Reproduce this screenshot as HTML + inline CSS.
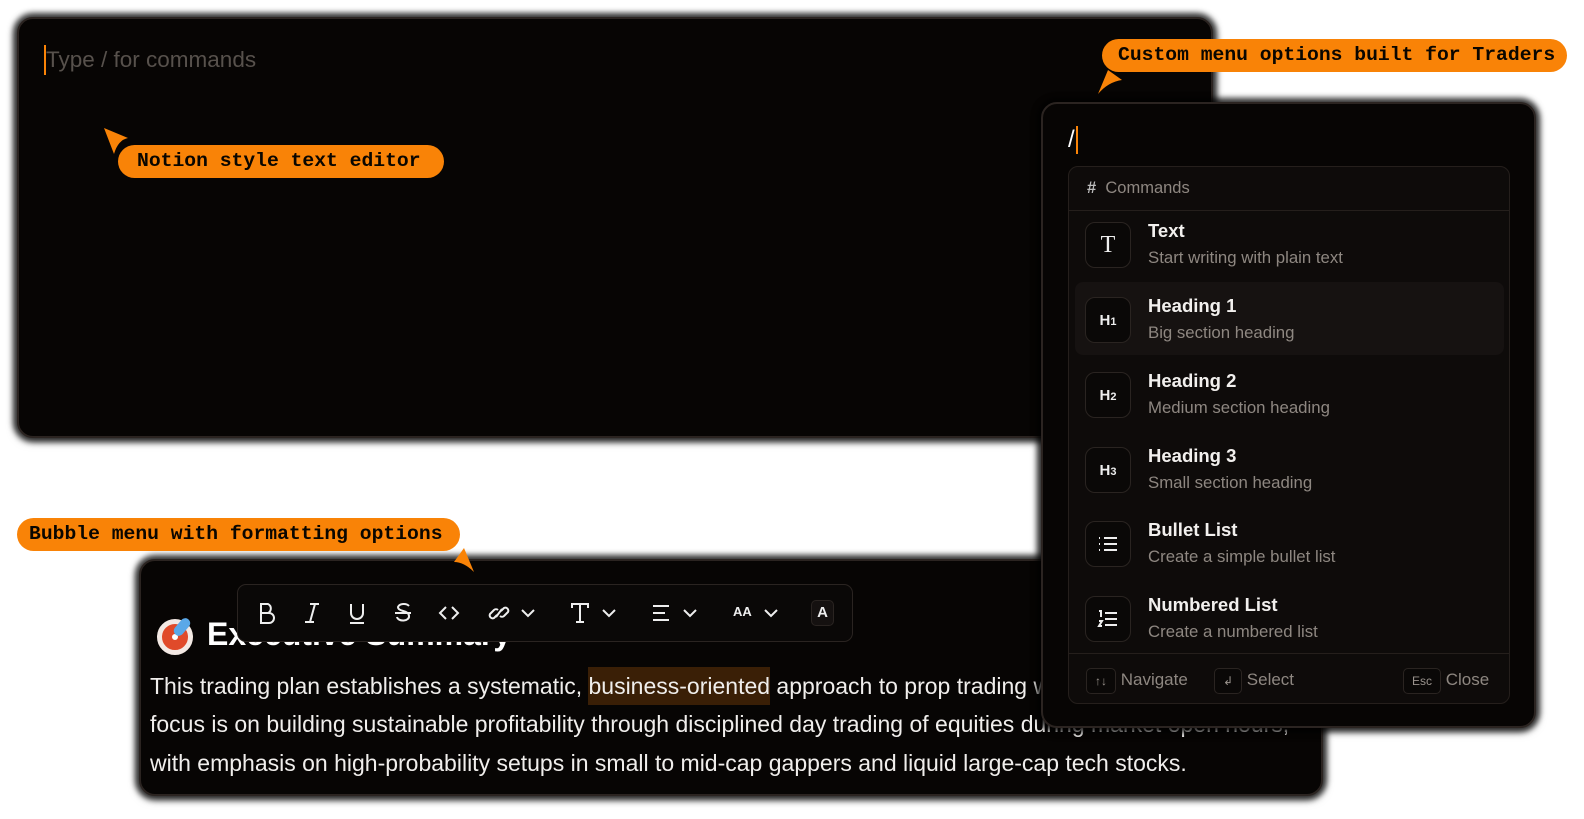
<!DOCTYPE html>
<html><head><meta charset="utf-8"><style>
*{margin:0;padding:0;box-sizing:border-box}
body{width:1584px;height:819px;background:#fff;position:relative;overflow:hidden;font-family:"Liberation Sans",sans-serif}
.panel{position:absolute;background:#070504;border:2px solid #2b2421;border-radius:16px;box-shadow:0 0 6px 4px rgba(0,0,0,.75),0 2px 10px rgba(0,0,0,.5)}
.pill{position:absolute;background:#f98307;color:#0a0600;border-radius:17px;font-family:"Liberation Mono",monospace;font-weight:bold;font-size:19.7px;height:33px;line-height:33px;padding-left:19px;white-space:nowrap}
.card{position:absolute;left:1068px;top:166px;width:442px;height:538px;background:#0e0b0a;border:1px solid #251f1c;border-radius:10px}
.item{position:absolute;left:0;width:440px;height:72px}
.ib{position:absolute;left:16px;top:4px;width:46px;height:46px;border:1px solid #2a2421;border-radius:10px;background:#0a0807;color:#eee;display:flex;align-items:center;justify-content:center;font-weight:bold;font-size:15px}
.t1{position:absolute;left:79px;top:2px;color:#f2f0ee;font-weight:bold;font-size:18.5px}
.t2{position:absolute;left:79px;top:30px;color:#8e8781;font-size:16.8px}
.kb{display:inline-block;border:1px solid #2a2421;border-radius:5px;background:#0a0807;color:#9a938d;font-size:12px;height:26px;line-height:24px;padding:0 8px;vertical-align:middle}
.ft{position:absolute;top:500px;color:#8e8781;font-size:17px;line-height:26px}
.tb svg{position:absolute;top:600px}
p.l{position:absolute;left:150px;color:#f0eeec;font-size:23px;white-space:nowrap}
.hl{background:#3a1f06;padding:6px 0}
</style></head><body>

<div class="panel" style="left:17px;top:17px;width:1196px;height:421px">
 <div style="position:absolute;left:25px;top:26px;width:2px;height:30px;background:#f98307"></div>
 <div style="position:absolute;left:27px;top:28px;color:#57514c;font-size:22.5px">Type / for commands</div>
</div>

<div class="pill" style="left:118px;top:145px;width:326px">Notion style text editor</div>
<svg style="position:absolute;left:102px;top:126px" width="30" height="30"><path d="M2 2 L26 12 Q16 14 12 28 Z" fill="#f98307"/></svg>

<div class="panel" style="left:139px;top:559px;width:1184px;height:237px">
 <div style="position:absolute;left:16px;top:58px;width:36px;height:36px;border-radius:50%;background:#e04a2a;border:5px solid #f3e9e4;box-shadow:inset 0 0 0 6px #e04a2a"></div>
 <div style="position:absolute;left:28px;top:70px;width:12px;height:12px;border-radius:50%;background:#fff;border:3px solid #e04a2a"></div>
 <div style="position:absolute;left:36px;top:56px;width:10px;height:20px;background:#5aa8e8;border-radius:5px;transform:rotate(40deg)"></div>
 <div style="position:absolute;left:66px;top:55px;color:#fff;font-weight:bold;font-size:32px">Executive Summary</div>
</div>
<p class="l" style="top:673px">This trading plan establishes a systematic, <span class="hl">business-oriented</span> approach to prop trading with a specific</p>
<p class="l" style="top:711px">focus is on building sustainable profitability through disciplined day trading of equities during market open hours,</p>
<p class="l" style="top:750px">with emphasis on high-probability setups in small to mid-cap gappers and liquid large-cap tech stocks.</p>

<div class="tb" style="position:absolute;left:0;top:0">
 <div style="position:absolute;left:237px;top:584px;width:616px;height:58px;background:#0a0807;border:1px solid #2a2421;border-radius:9px"></div>
 <svg style="left:256px" width="22" height="26" viewBox="0 0 22 26" fill="none" stroke="#eee" stroke-width="2"><path d="M5 4h7a5 5 0 010 9H5zM5 13h8a5 5 0 010 10H5z"/></svg>
 <svg style="left:301px" width="22" height="26" viewBox="0 0 22 26" fill="none" stroke="#eee" stroke-width="2"><path d="M9 4h9M4 22h9M14 4 9 22"/></svg>
 <svg style="left:346px" width="22" height="26" viewBox="0 0 22 26" fill="none" stroke="#eee" stroke-width="2"><path d="M5 4v9a6 6 0 0012 0V4M4 23h14"/></svg>
 <svg style="left:392px" width="22" height="26" viewBox="0 0 22 26" fill="none" stroke="#eee" stroke-width="2"><path d="M17 6a6 4 0 00-11 1c0 5 11 3 11 9a6 4 0 01-12 1M3 13h16"/></svg>
 <svg style="left:438px" width="22" height="26" viewBox="0 0 22 26" fill="none" stroke="#eee" stroke-width="2"><path d="M8 7 2 13l6 6M14 7l6 6-6 6"/></svg>
 <svg style="left:488px" width="22" height="26" viewBox="0 0 22 26" fill="none" stroke="#eee" stroke-width="2"><path d="M9 15l-3 3a3 3 0 01-4-4l4-4a3 3 0 014 0M13 11l3-3a3 3 0 014 4l-4 4a3 3 0 01-4 0M8 17l6-8"/></svg>
 <svg style="left:520px" width="16" height="26" viewBox="0 0 16 26" fill="none" stroke="#eee" stroke-width="2"><path d="M2 10l6 6 6-6"/></svg>
 <svg style="left:569px" width="22" height="26" viewBox="0 0 22 26" fill="none" stroke="#eee" stroke-width="2"><path d="M3 8V4h16v4M11 4v18M7 22h8"/></svg>
 <svg style="left:601px" width="16" height="26" viewBox="0 0 16 26" fill="none" stroke="#eee" stroke-width="2"><path d="M2 10l6 6 6-6"/></svg>
 <svg style="left:650px" width="22" height="26" viewBox="0 0 22 26" fill="none" stroke="#eee" stroke-width="2"><path d="M3 6h16M3 13h12M3 20h16"/></svg>
 <svg style="left:682px" width="16" height="26" viewBox="0 0 16 26" fill="none" stroke="#eee" stroke-width="2"><path d="M2 10l6 6 6-6"/></svg>
 <div style="position:absolute;left:733px;top:604px;color:#eee;font-weight:bold;font-size:13px">AA</div>
 <svg style="left:763px" width="16" height="26" viewBox="0 0 16 26" fill="none" stroke="#eee" stroke-width="2"><path d="M2 10l6 6 6-6"/></svg>
 <div style="position:absolute;left:811px;top:600px;width:23px;height:26px;border:1px solid #2a2421;border-radius:5px;background:#151110;color:#eee;font-weight:bold;font-size:15px;text-align:center;line-height:24px">A</div>
</div>

<div class="pill" style="left:17px;top:518px;width:443px;padding-left:12px">Bubble menu with formatting options</div>
<svg style="position:absolute;left:450px;top:546px" width="28" height="28"><path d="M14 2 L24 26 Q14 16 4 16 Z" fill="#f98307"/></svg>

<div class="panel" style="left:1041px;top:102px;width:495px;height:626px">
 <div style="position:absolute;left:25px;top:22px;color:#fff;font-size:24px">/</div>
 <div style="position:absolute;left:33px;top:22px;width:2px;height:28px;background:#f98307"></div>
</div>
<div class="card">
 <div style="position:absolute;left:18px;top:12px;color:#8e8781;font-size:16.5px"><b style="color:#bbb">#</b>&nbsp; Commands</div>
 <div style="position:absolute;left:0;top:43px;width:440px;height:1px;background:#251f1c"></div>
 <div class="item" style="top:51px"><div class="ib" style="font-family:'Liberation Serif',serif;font-weight:normal;font-size:24px">T</div><div class="t1">Text</div><div class="t2">Start writing with plain text</div></div>
 <div style="position:absolute;left:6px;top:115px;width:429px;height:73px;background:#161211;border-radius:8px"></div>
 <div class="item" style="top:126px"><div class="ib">H<span style="font-size:11px;margin-top:4px">1</span></div><div class="t1">Heading 1</div><div class="t2">Big section heading</div></div>
 <div class="item" style="top:201px"><div class="ib">H<span style="font-size:11px;margin-top:4px">2</span></div><div class="t1">Heading 2</div><div class="t2">Medium section heading</div></div>
 <div class="item" style="top:276px"><div class="ib">H<span style="font-size:11px;margin-top:4px">3</span></div><div class="t1">Heading 3</div><div class="t2">Small section heading</div></div>
 <div class="item" style="top:350px"><div class="ib"><svg width="22" height="18" viewBox="0 0 22 18" fill="none" stroke="#eee" stroke-width="2"><path d="M2 3h1M2 9h1M2 15h1M7 3h13M7 9h13M7 15h13"/></svg></div><div class="t1">Bullet List</div><div class="t2">Create a simple bullet list</div></div>
 <div class="item" style="top:425px"><div class="ib"><svg width="22" height="20" viewBox="0 0 22 20" fill="none" stroke="#eee" stroke-width="2"><path d="M2 2h2v6M2 12h3l-3 5h3M8 4h12M8 10h12M8 16h12"/></svg></div><div class="t1">Numbered List</div><div class="t2">Create a numbered list</div></div>
 <div style="position:absolute;left:0;top:486px;width:440px;height:1px;background:#251f1c"></div>
 <div class="ft" style="left:17px"><span class="kb">↑↓</span> Navigate</div>
 <div class="ft" style="left:145px"><span class="kb">↲</span> Select</div>
 <div class="ft" style="left:334px"><span class="kb">Esc</span> Close</div>
</div>

<div class="pill" style="left:1102px;top:39px;width:465px;padding-left:16px">Custom menu options built for Traders</div>
<svg style="position:absolute;left:1094px;top:68px" width="30" height="28"><path d="M14 2 L4 26 Q14 14 28 12 Z" fill="#f98307"/></svg>

</body></html>
